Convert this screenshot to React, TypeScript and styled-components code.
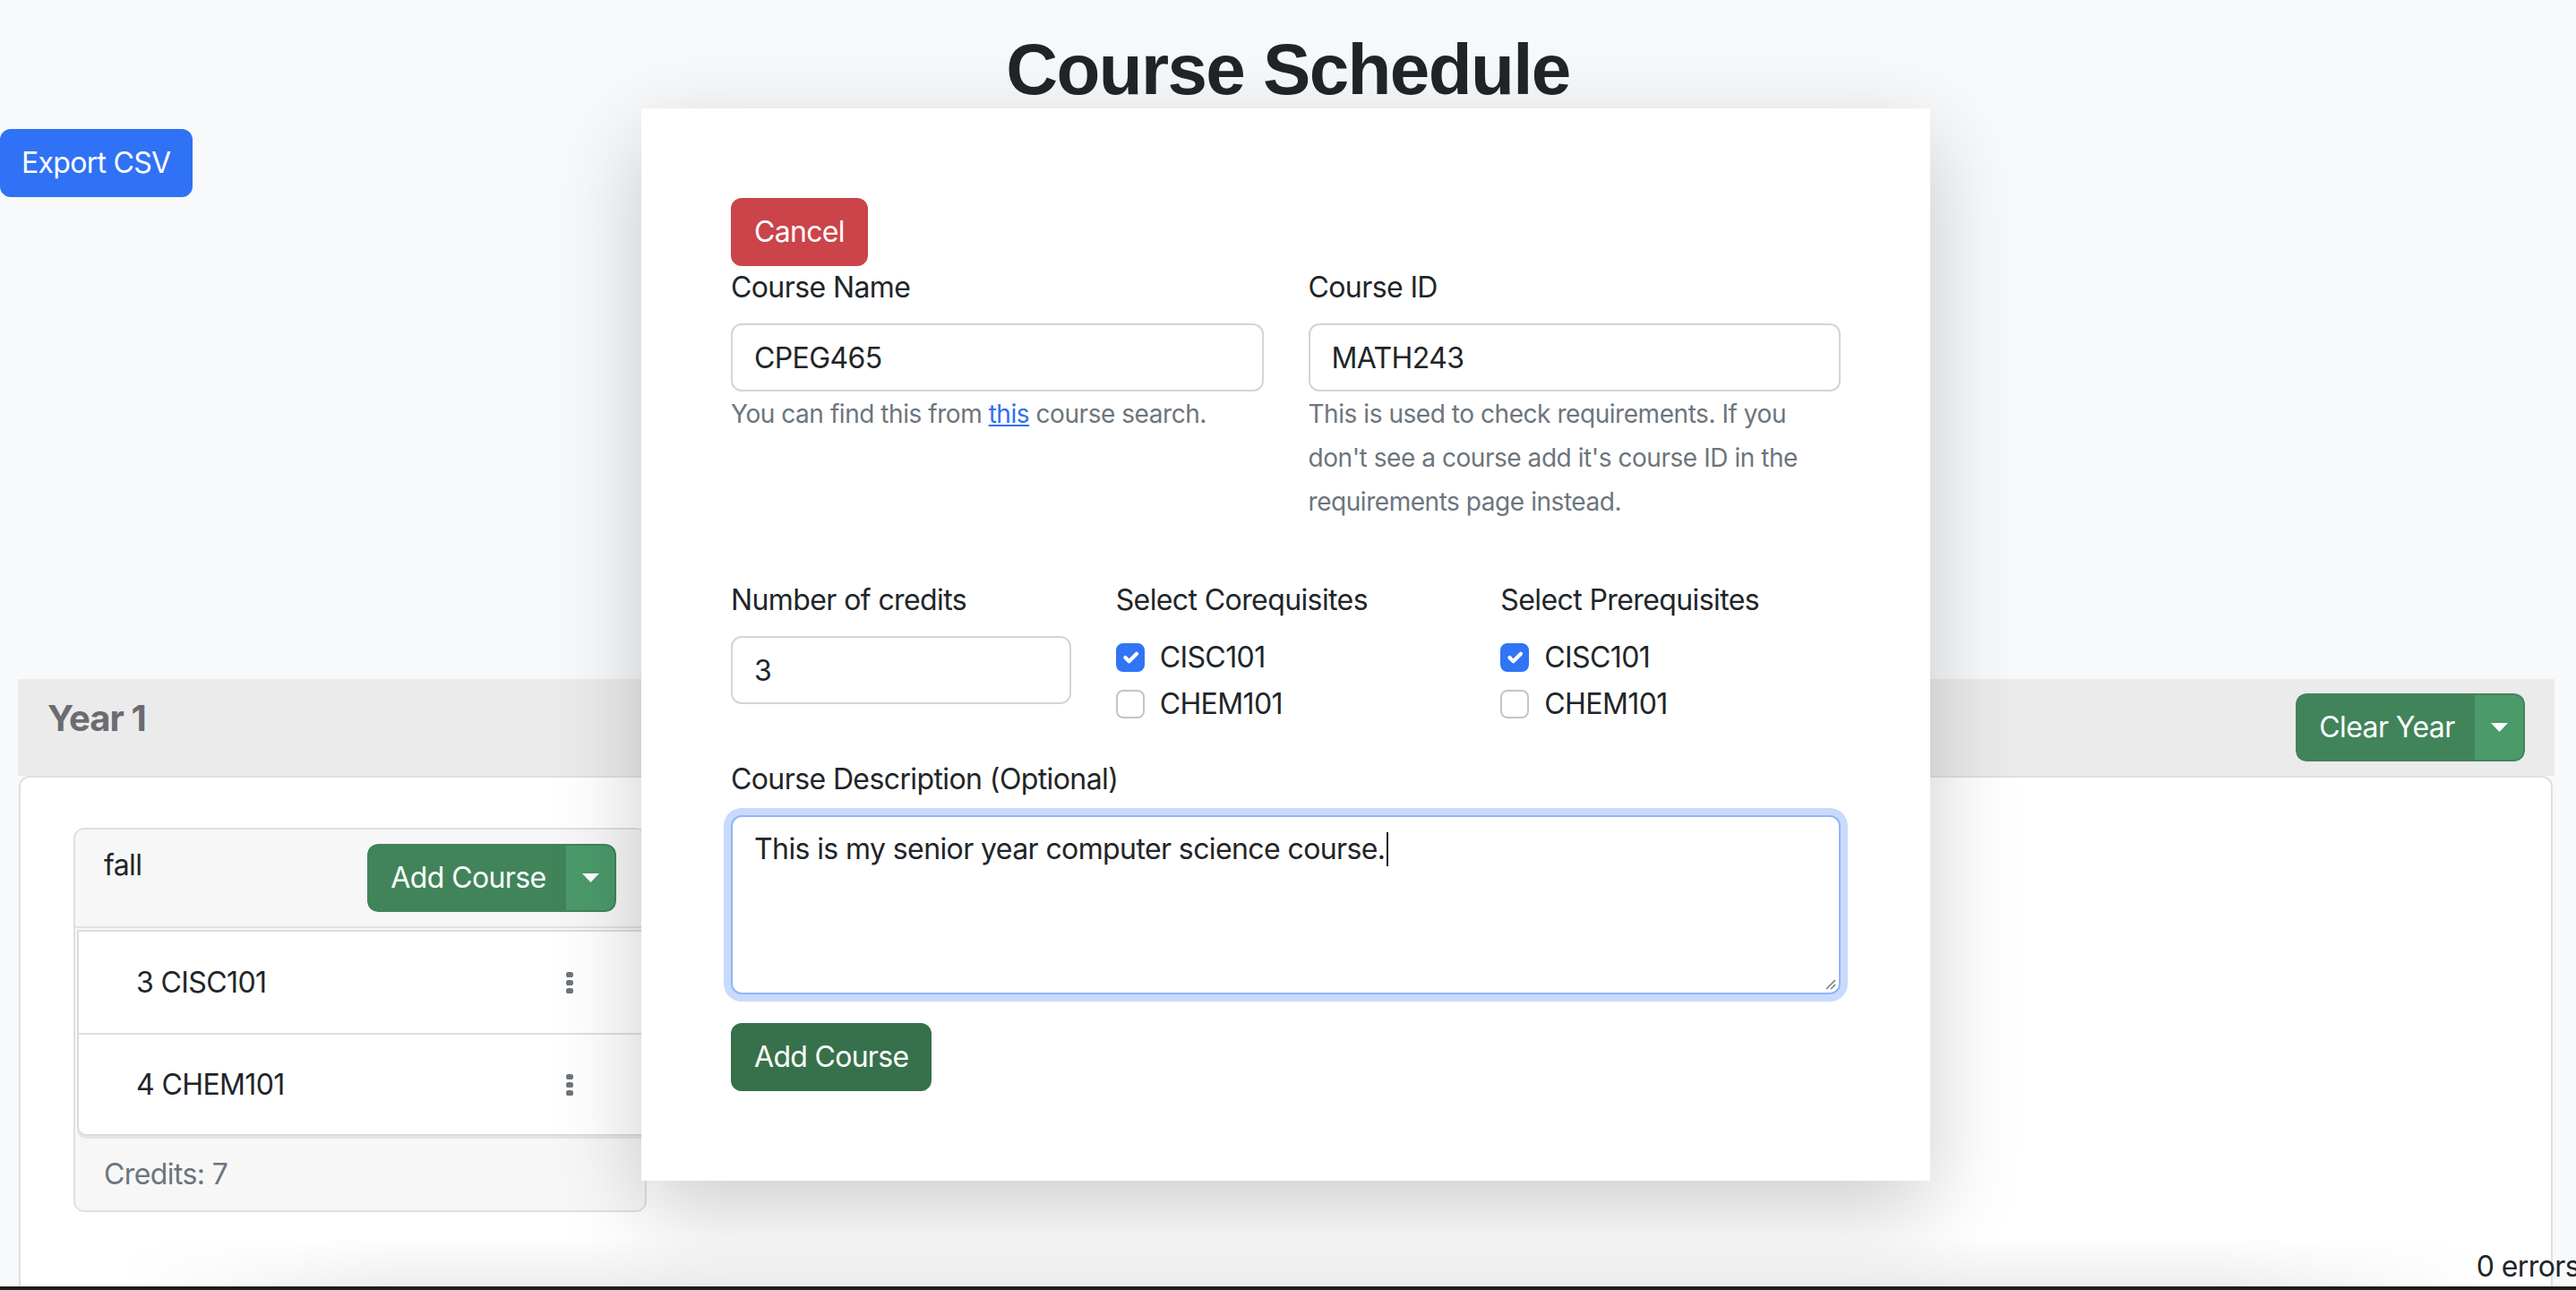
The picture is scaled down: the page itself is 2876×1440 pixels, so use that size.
import React from "react";
import styled, { createGlobalStyle } from "styled-components";

const GlobalStyle = createGlobalStyle`
  html, body { margin: 0; padding: 0; }
  body {
    background: #f8f9fa;
    font-family: Inter, "Noto Sans", sans-serif;
    font-size: 32px;
    line-height: 48px;
    letter-spacing: -0.6px;
    color: #212529;
    overflow: hidden;
  }
  * { box-sizing: border-box; }
`;

const Page = styled.div`
  position: relative;
  width: 2876px;
  height: 1440px;
  overflow: hidden;
`;

const Title = styled.h1`
  margin: 30px 0 0;
  text-align: center;
  font-family: "Liberation Sans", Arial, sans-serif;
  font-weight: 700;
  font-size: 80px;
  line-height: 96px;
  letter-spacing: -1.6px;
  color: #212529;
`;

const Btn = styled.button<{ $bg: string }>`
  display: inline-flex;
  align-items: center;
  height: 76px;
  padding: 12px 24px;
  border: 2px solid ${(p) => p.$bg};
  border-radius: 12px;
  background: ${(p) => p.$bg};
  color: #fff;
  font-family: Inter, "Noto Sans", sans-serif;
  font-size: 32px;
  line-height: 48px;
  letter-spacing: -0.7px;
  white-space: nowrap;
  cursor: pointer;
`;

const ExportBtn = styled(Btn)`
  margin-top: 18px;
  padding: 12px 22px;
`;

const SplitGroup = styled.div`
  display: inline-flex;
  height: 76px;
  border-radius: 12px;
  overflow: hidden;
`;

const SplitMain = styled.button<{ $w: number }>`
  width: ${(p) => p.$w}px;
  height: 76px;
  border: 2px solid #41845a;
  border-right: none;
  border-radius: 12px 0 0 12px;
  background: #41845a;
  color: #fff;
  font-family: Inter, "Noto Sans", sans-serif;
  font-size: 32px;
  line-height: 48px;
  letter-spacing: -0.6px;
  white-space: nowrap;
  padding: 0 0 0 2px;
  text-align: center;
`;

const SplitToggle = styled.button`
  width: 56px;
  height: 76px;
  display: flex;
  align-items: center;
  justify-content: center;
  border: 2px solid #41845a;
  border-left: none;
  border-radius: 0 12px 12px 0;
  background: #4b9a6a;
  padding: 0;
`;

const YearSection = styled.section`
  margin: 538px 24px 0 20px;
`;

const YearHeader = styled.div`
  display: flex;
  justify-content: space-between;
  align-items: flex-start;
  height: 108px;
  padding: 16px 33px 16px 33px;
  background: #ebebeb;
`;

const YearTitle = styled.h5`
  margin: 4px 0 0 0;
  font-size: 40px;
  line-height: 48px;
  font-weight: 700;
  letter-spacing: -0.9px;
  color: #6b6c70;
`;

const YearBody = styled.div`
  height: 640px;
  margin-left: 1px;
  margin-right: 2px;
  background: #fff;
  border: 2px solid #e0e0e0;
  border-radius: 12px 12px 0 0;
  padding: 56px 0 0 59px;
`;

const SemesterCard = styled.div`
  width: 640px;
  border: 2px solid #e0e0e0;
  border-radius: 12px;
  overflow: hidden;
  background: #f7f7f7;
`;

const SemesterHeader = styled.div`
  display: flex;
  justify-content: space-between;
  align-items: flex-start;
  padding: 16px 32px;
  border-bottom: 2px solid #e0e0e0;
  background: #f7f7f7;
`;

const CourseList = styled.div`
  margin: 2px 0 0 2px;
  border: 2px solid #dcdcdc;
  border-right: none;
  border-radius: 0 0 0 10px;
  background: #fff;
  box-shadow: 0 3px 0 #e4e4e4;
`;

const CourseItem = styled.div`
  display: flex;
  justify-content: space-between;
  align-items: center;
  height: 113px;
  padding: 0 80px 0 64px;
  & + & {
    border-top: 2px solid #e0e0e0;
  }
`;

const SemesterFooter = styled.div`
  padding: 16px 32px;
  margin-top: 3px;
  color: #6c757d;
  background: #f7f7f7;
`;

const Modal = styled.div`
  position: absolute;
  left: 716px;
  top: 121px;
  width: 1439px;
  padding: 100px;
  background: #fff;
  box-shadow: 0 32px 96px rgba(0, 0, 0, 0.2);
`;

const Grid = styled.div<{ $cols: number; $mt: number }>`
  display: grid;
  grid-template-columns: repeat(${(p) => p.$cols}, 1fr);
  column-gap: 50px;
  margin-top: ${(p) => p.$mt}px;
`;

const Group = styled.div<{ $mt?: number }>`
  margin-top: ${(p) => p.$mt ?? 0}px;
`;

const Label = styled.label`
  display: block;
  margin-bottom: 16px;
  font-size: 32px;
  line-height: 48px;
`;

const Input = styled.input`
  display: block;
  width: 100%;
  height: 76px;
  padding: 12px 24px;
  border: 2px solid #d1d5da;
  border-radius: 12px;
  background: #fff;
  font-family: Inter, "Noto Sans", sans-serif;
  font-size: 32px;
  line-height: 48px;
  letter-spacing: -0.6px;
  color: #212529;
  outline: none;
`;

const Help = styled.small`
  font-size: 28px;
  letter-spacing: -0.45px;
  color: #6c757d;
`;

const HelpLink = styled.a`
  color: #2f6ff0;
  text-decoration: underline;
`;

const CheckRow = styled.div`
  display: flex;
  align-items: flex-start;
  gap: 17px;
  min-height: 48px;
  margin-bottom: 4px;
`;

const CheckBox = styled.span<{ $on: boolean }>`
  flex: none;
  width: 32px;
  height: 32px;
  margin-top: 8px;
  border-radius: 8px;
  border: 2px solid ${(p) => (p.$on ? "#3174f5" : "#c4c4c4")};
  background: ${(p) => (p.$on ? "#3174f5" : "#fff")};
  display: flex;
  align-items: center;
  justify-content: center;
`;

const TextArea = styled.div`
  position: relative;
  height: 200px;
  padding: 12px 24px;
  border: 2px solid #8fb6f8;
  border-radius: 12px;
  box-shadow: 0 0 0 8px #c9dbfc;
  background: #fff;
`;

const Caret = styled.span`
  display: inline-block;
  width: 2px;
  height: 38px;
  margin-left: 1px;
  vertical-align: -8px;
  background: #111;
`;

const Grip = styled.svg`
  position: absolute;
  right: 3px;
  bottom: 3px;
`;

const SubmitBtn = styled(Btn)`
  margin-top: 32px;
`;

const BottomShade = styled.div`
  position: absolute;
  left: 130px;
  right: 90px;
  bottom: 4px;
  height: 56px;
  background: linear-gradient(to bottom, rgba(0, 0, 0, 0), rgba(0, 0, 0, 0.07));
  -webkit-mask-image: linear-gradient(to right, transparent, #000 12%, #000 88%, transparent);
  mask-image: linear-gradient(to right, transparent, #000 12%, #000 88%, transparent);
`;

const Status = styled.div`
  position: absolute;
  right: -4px;
  bottom: 2px;
  font-size: 32px;
  line-height: 48px;
  color: #212529;
`;

const Frame = styled.div`
  position: absolute;
  left: 0;
  right: 0;
  bottom: 0;
  height: 4px;
  background: #1d1d1f;
`;

const Caret3 = () => (
  <svg width="19" height="10" viewBox="0 0 19 10">
    <polygon points="0,0 19,0 9.5,10" fill="#fff" />
  </svg>
);

const Kebab = () => (
  <svg width="8" height="24" viewBox="0 0 8 24">
    <rect x="0" y="0" width="8" height="6" rx="2.6" fill="#6c757d" />
    <rect x="0" y="9" width="8" height="6" rx="2.6" fill="#6c757d" />
    <rect x="0" y="18" width="8" height="6" rx="2.6" fill="#6c757d" />
  </svg>
);

const Check = ({ on, label }: { on: boolean; label: string }) => (
  <CheckRow>
    <CheckBox $on={on}>
      {on && (
        <svg width="28" height="28" viewBox="0 0 20 20">
          <path d="m6 10 3 3 6-6" fill="none" stroke="#fff" strokeWidth="3" strokeLinecap="round" strokeLinejoin="round" />
        </svg>
      )}
    </CheckBox>
    <span>{label}</span>
  </CheckRow>
);

const Split = ({ label, w }: { label: string; w: number }) => (
  <SplitGroup>
    <SplitMain $w={w}>{label}</SplitMain>
    <SplitToggle>
      <Caret3 />
    </SplitToggle>
  </SplitGroup>
);

export default function App() {
  return (
    <Page>
      <GlobalStyle />
      <Title>Course Schedule</Title>
      <ExportBtn $bg="#2f72f5">Export CSV</ExportBtn>

      <YearSection>
        <YearHeader>
          <YearTitle>Year 1</YearTitle>
          <Split label="Clear Year" w={200} />
        </YearHeader>
        <YearBody>
          <SemesterCard>
            <SemesterHeader>
              <span>fall</span>
              <Split label="Add Course" w={222} />
            </SemesterHeader>
            <CourseList>
              <CourseItem>
                <span>3 CISC101</span>
                <Kebab />
              </CourseItem>
              <CourseItem>
                <span>4 CHEM101</span>
                <Kebab />
              </CourseItem>
            </CourseList>
            <SemesterFooter>Credits: 7</SemesterFooter>
          </SemesterCard>
        </YearBody>
      </YearSection>

      <Modal>
        <Btn $bg="#cb444a">Cancel</Btn>
        <Grid $cols={2} $mt={0}>
          <Group>
            <Label>Course Name</Label>
            <Input readOnly value="CPEG465" />
            <Help>
              You can find this from <HelpLink href="#">this</HelpLink> course search.
            </Help>
          </Group>
          <Group>
            <Label>Course ID</Label>
            <Input readOnly value="MATH243" />
            <Help>
              This is used to check requirements. If you don't see a course add it's course ID in the
              requirements page instead.
            </Help>
          </Group>
        </Grid>
        <Grid $cols={3} $mt={62}>
          <Group>
            <Label>Number of credits</Label>
            <Input readOnly value="3" />
          </Group>
          <Group>
            <Label>Select Corequisites</Label>
            <Check on label="CISC101" />
            <Check on={false} label="CHEM101" />
          </Group>
          <Group>
            <Label>Select Prerequisites</Label>
            <Check on label="CISC101" />
            <Check on={false} label="CHEM101" />
          </Group>
        </Grid>
        <Group $mt={32}>
          <Label>Course Description (Optional)</Label>
          <TextArea>
            This is my senior year computer science course.
            <Caret />
            <Grip width="14" height="14" viewBox="0 0 14 14">
              <path d="M13 3 3 13M13 8 8 13" stroke="#777" strokeWidth="1.5" fill="none" />
            </Grip>
          </TextArea>
        </Group>
        <SubmitBtn $bg="#37714b">Add Course</SubmitBtn>
      </Modal>

      <BottomShade />
      <Status>0 errors</Status>
      <Frame />
    </Page>
  );
}
